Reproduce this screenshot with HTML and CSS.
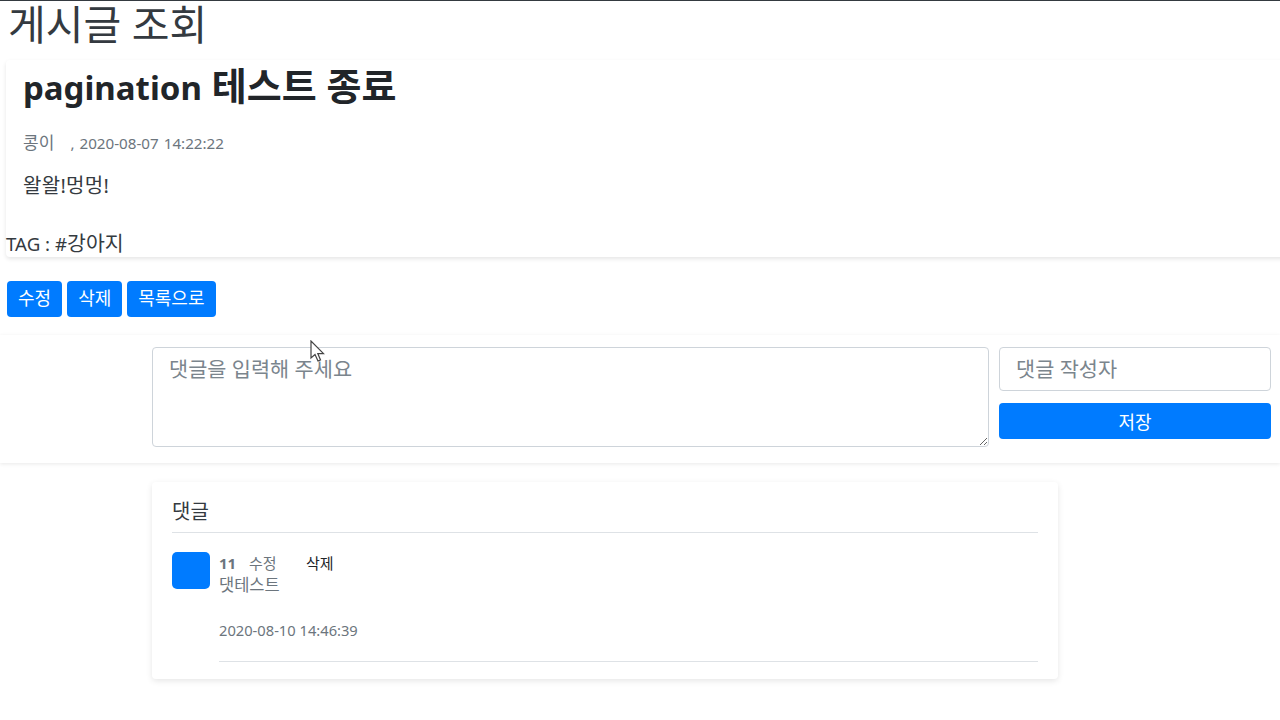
FILE: index.html
```html
<!DOCTYPE html>
<html lang="ko">
<head>
<meta charset="utf-8">
<title>게시글 조회</title>
<link rel="stylesheet" href="styles.css">
</head>
<body>
<div class="topline"></div>
<h1 class="page-title">게시글 조회</h1>
<section class="post">
  <h2 class="post-title"><span class="latin-title">pagination</span> 테스트 종료</h2>
  <p class="post-meta"><span class="meta-author">콩이</span><span class="meta-date"> , 2020-08-07 14:22:22</span></p>
  <p class="post-body">왈왈!멍멍!</p>
  <div class="post-tags"><span class="tag-label">TAG : #</span>강아지</div>
</section>
<div class="actions">
  <a class="btn">수정</a>
  <a class="btn">삭제</a>
  <a class="btn">목록으로</a>
</div>
<section class="reply-form">
  <textarea class="reply-text" placeholder="댓글을 입력해 주세요"></textarea>
  <div class="reply-side">
    <input class="reply-writer" placeholder="댓글 작성자">
    <button class="btn btn-block">저장</button>
  </div>
</section>
<section class="replies">
  <h3 class="replies-title">댓글</h3>
  <div class="reply">
    <div class="avatar"></div>
    <div class="reply-main">
      <div class="reply-head"><strong class="reply-author">11</strong><a class="reply-edit">수정</a><a class="reply-del">삭제</a></div>
      <div class="reply-content">댓테스트</div>
      <div class="reply-date">2020-08-10 14:46:39</div>
    </div>
  </div>
</section>
<svg class="cursor" width="16" height="24" viewBox="0 0 16 24"><path d="M1 1V18L5 14.5L8 21L10.5 20L7.8 13.6H13.5Z" fill="#fff" stroke="#444" stroke-width="1.2"/></svg>
</body>
</html>
```
FILE: styles.css
```css
* { box-sizing: border-box; }
html, body { margin: 0; padding: 0; }
body {
  width: 1280px;
  height: 720px;
  overflow: hidden;
  background: #fff;
  color: #212529;
  font-family: "Noto Sans", "Noto Sans CJK KR", sans-serif;
  font-size: 16px;
  line-height: 1.5;
  position: relative;
}
.topline { height: 1px; background: #343a40; }
.page-title {
  margin: 0 0 12px 8px;
  font-size: 41px;
  font-weight: 400;
  line-height: 47px;
  color: #343a40;
}
.post {
  margin-left: 6px;
  width: 1290px;
  height: 197px;
  border-radius: 4px;
  box-shadow: 0 2px 4px rgba(0,0,0,.1);
}
.post-title {
  margin: 0;
  padding: 4px 0 0 17px;
  font-size: 38px;
  font-weight: 700;
  line-height: 42px;
}
.latin-title { font-size: 33px; }
.post-meta {
  display: flex;
  margin: 0;
  padding: 22px 0 0 17px;
  line-height: 24px;
  color: #6c757d;
}
.meta-author { font-size: 17px; width: 42.5px; }
.meta-date { font-size: 15.2px; word-spacing: 1px; white-space: pre; }
.post-body {
  margin: 0;
  padding: 19px 0 0 17px;
  font-size: 20px;
  letter-spacing: .3px;
  line-height: 24px;
  color: #343a40;
}
.post-tags {
  margin-top: 33px;
  font-size: 20.5px;
  line-height: 24px;
  color: #343a40;
}
.tag-label { font-size: 18.7px; }
.actions {
  display: flex;
  gap: 5px;
  margin: 24px 0 0 7px;
}
.btn {
  display: block;
  padding: 0 11px;
  height: 36px;
  line-height: 35px;
  background: #007bff;
  border: 0;
  border-radius: 4px;
  color: #fff;
  font-family: inherit;
  font-size: 18px;
}
.reply-form {
  display: flex;
  gap: 10px;
  margin-top: 18px;
  height: 128px;
  padding: 12px 9px 0 152px;
  box-shadow: 0 1px 4px rgba(0,0,0,.09);
}
.reply-text {
  display: block;
  width: 837px;
  height: 100px;
  padding: 6px 16px;
  border: 1px solid #ced4da;
  border-radius: 4px;
  font-family: inherit;
  font-size: 20.8px;
  line-height: 30px;
  color: #495057;
}
.reply-side { flex: 1; display: flex; flex-direction: column; gap: 12px; }
.reply-writer {
  display: block;
  width: 100%;
  height: 44px;
  padding: 0 16px;
  border: 1px solid #ced4da;
  border-radius: 4px;
  font-family: inherit;
  font-size: 20.8px;
}
::placeholder { color: #7b858d; opacity: 1; }
.btn-block { width: 100%; line-height: 37px; padding-top: 1px; }
.replies {
  margin: 19px 0 0 152px;
  width: 906px;
  height: 197px;
  padding: 0 20px;
  border-radius: 4px;
  box-shadow: 0 2px 6px rgba(0,0,0,.1);
}
.replies-title {
  margin: 0;
  height: 51px;
  padding-top: 15px;
  border-bottom: 1px solid #dee2e6;
  font-size: 20px;
  font-weight: 400;
  line-height: 30px;
  color: #343a40;
}
.reply { display: flex; gap: 9px; padding-top: 19px; }
.avatar { width: 38px; height: 37px; border-radius: 5px; background: #007bff; flex: none; }
.reply-main { flex: 1; font-size: 15px; line-height: 22px; color: #6c757d; }
.reply-head { display: flex; }
.reply-author { font-weight: 700; width: 30px; }
.reply-edit { width: 57px; }
.reply-del { color: #212529; }
.reply-content { font-size: 16.5px; }
.reply-date { margin-top: 23px; padding-bottom: 20px; font-size: 14.7px; border-bottom: 1px solid #dee2e6; }
.cursor { position: absolute; left: 310px; top: 340px; }
```
